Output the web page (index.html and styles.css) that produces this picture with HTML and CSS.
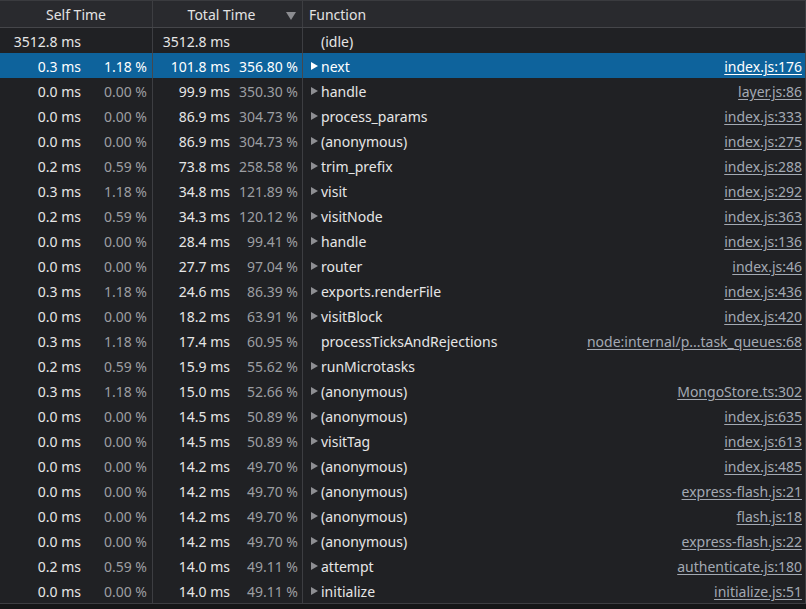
FILE: index.html
```html
<!DOCTYPE html>
<html>
<head>
<meta charset="utf-8">
<link rel="stylesheet" href="styles.css">
</head>
<body>
<div class="profile">
  <div class="row head">
    <div class="cell c1"><span class="htitle">Self Time</span></div>
    <div class="cell c2"><span class="htitle">Total Time</span><span class="sort"></span></div>
    <div class="cell c3"><span class="htitle">Function</span></div>
  </div>
  <div id="rows"></div>
  <div class="foot"></div>
</div>
<script src="app.js"></script>
</body>
</html>
```

FILE: styles.css
```css
html, body {
  margin: 0;
  padding: 0;
  background: #202124;
}
body {
  font-family: "Noto Sans", "Open Sans", sans-serif;
  font-size: 14px;
  color: #e3e3e3;
  width: 806px;
  height: 609px;
  overflow: hidden;
}
.profile {
  display: flex;
  flex-direction: column;
  height: 609px;
}
.row {
  display: grid;
  grid-template-columns: 153px 150px 503px;
  height: 25px;
  line-height: 21px;
  white-space: nowrap;
}
.cell {
  box-sizing: border-box;
  border-right: 1px solid #3d3e42;
  display: flex;
  align-items: center;
  overflow: hidden;
  padding-top: 2px;
}
.head {
  height: 28px;
  background: #292a2e;
  border-top: 1px solid #3a3b3f;
  border-bottom: 1px solid #45464a;
  box-sizing: border-box;
}
.head .cell { border-right-color: #3d3e42; padding-top: 1px; }
.head .c1 { justify-content: center; }
.head .c2 { justify-content: center; position: relative; }
.head .c2 .htitle { margin-left: -12px; }
.head .c3 { padding-left: 6px; }
.sort {
  position: absolute;
  right: 6px;
  top: 11px;
  width: 0;
  height: 0;
  border-left: 5px solid transparent;
  border-right: 5px solid transparent;
  border-top: 8px solid #8b8c90;
}
.ms {
  text-align: right;
  color: #e6e6e6;
}
.c1 .ms { width: 81px; }
.c1 .pc { width: 66px; }
.c2 .ms { width: 77px; }
.c2 .pc { width: 68px; }
.pc {
  text-align: right;
  color: #9c9ea2;
}
.c3 {
  padding-left: 8px;
  padding-right: 3px;
}
.tri {
  width: 0;
  height: 0;
  border-top: 4px solid transparent;
  border-bottom: 4px solid transparent;
  border-left: 7px solid #8e8f93;
  margin-right: 3px;
  margin-top: -1px;
  flex: none;
}
.notri {
  width: 10px;
  flex: none;
}
.fname {
  flex: 1;
  color: #e6e6e6;
}
.link {
  color: #a3a9b3;
  text-decoration: underline;
  text-underline-offset: 2px;
}
.sel {
  background: #0e639c;
}
.sel .pc, .sel .ms, .sel .fname, .sel .link { color: #ffffff; }
.sel .tri { border-left-color: #ffffff; }
.sel .cell { border-right-color: #45484d; }
.foot {
  flex: 1;
  border-top: 1px solid #3d3e42;
  background: #151617;
}
```

FILE: app.js
```js
var data = [
  ["3512.8 ms","","3512.8 ms","","(idle)","",0],
  ["0.3 ms","1.18 %","101.8 ms","356.80 %","next","index.js:176",1],
  ["0.0 ms","0.00 %","99.9 ms","350.30 %","handle","layer.js:86",1],
  ["0.0 ms","0.00 %","86.9 ms","304.73 %","process_params","index.js:333",1],
  ["0.0 ms","0.00 %","86.9 ms","304.73 %","(anonymous)","index.js:275",1],
  ["0.2 ms","0.59 %","73.8 ms","258.58 %","trim_prefix","index.js:288",1],
  ["0.3 ms","1.18 %","34.8 ms","121.89 %","visit","index.js:292",1],
  ["0.2 ms","0.59 %","34.3 ms","120.12 %","visitNode","index.js:363",1],
  ["0.0 ms","0.00 %","28.4 ms","99.41 %","handle","index.js:136",1],
  ["0.0 ms","0.00 %","27.7 ms","97.04 %","router","index.js:46",1],
  ["0.3 ms","1.18 %","24.6 ms","86.39 %","exports.renderFile","index.js:436",1],
  ["0.0 ms","0.00 %","18.2 ms","63.91 %","visitBlock","index.js:420",1],
  ["0.3 ms","1.18 %","17.4 ms","60.95 %","processTicksAndRejections","node:internal/p...task_queues:68",0],
  ["0.2 ms","0.59 %","15.9 ms","55.62 %","runMicrotasks","",1],
  ["0.3 ms","1.18 %","15.0 ms","52.66 %","(anonymous)","MongoStore.ts:302",1],
  ["0.0 ms","0.00 %","14.5 ms","50.89 %","(anonymous)","index.js:635",1],
  ["0.0 ms","0.00 %","14.5 ms","50.89 %","visitTag","index.js:613",1],
  ["0.0 ms","0.00 %","14.2 ms","49.70 %","(anonymous)","index.js:485",1],
  ["0.0 ms","0.00 %","14.2 ms","49.70 %","(anonymous)","express-flash.js:21",1],
  ["0.0 ms","0.00 %","14.2 ms","49.70 %","(anonymous)","flash.js:18",1],
  ["0.0 ms","0.00 %","14.2 ms","49.70 %","(anonymous)","express-flash.js:22",1],
  ["0.2 ms","0.59 %","14.0 ms","49.11 %","attempt","authenticate.js:180",1],
  ["0.0 ms","0.00 %","14.0 ms","49.11 %","initialize","initialize.js:51",1]
];
var html = "";
data.forEach(function (d, i) {
  html += '<div class="row' + (i === 1 ? ' sel' : '') + '">' +
    '<div class="cell c1"><span class="ms">' + d[0] + '</span><span class="pc">' + d[1] + '</span></div>' +
    '<div class="cell c2"><span class="ms">' + d[2] + '</span><span class="pc">' + d[3] + '</span></div>' +
    '<div class="cell c3"><span class="' + (d[6] ? 'tri' : 'notri') + '"></span><span class="fname">' + d[4] + '</span>' +
    (d[5] ? '<span class="link">' + d[5] + '</span>' : '') + '</div>' +
    '</div>';
});
document.getElementById("rows").innerHTML = html;
```
